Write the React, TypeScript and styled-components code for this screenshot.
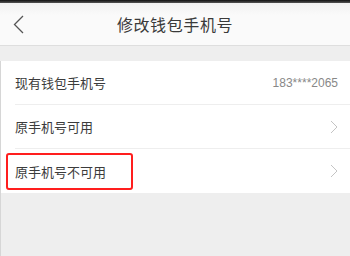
import React from 'react';
import styled, { createGlobalStyle } from 'styled-components';

const GlobalStyle = createGlobalStyle`
  html, body {
    margin: 0;
    padding: 0;
    background: #eeeeee;
  }
  body {
    font-family: "Noto Sans CJK SC", "Liberation Sans", sans-serif;
  }
`;

const Page = styled.div`
  width: 350px;
  height: 256px;
  background: #eeeeee;
  overflow: hidden;
  position: relative;
`;

const StatusEdge = styled.div`
  height: 3px;
  background: linear-gradient(#111, #555);
`;

const Header = styled.header`
  height: 42px;
  display: grid;
  grid-template-columns: 40px 1fr 40px;
  align-items: center;
  background: linear-gradient(#f2f2f2, #fafafa 30%);
  border-bottom: 1px solid #dedede;
`;

const BackButton = styled.div`
  display: flex;
  align-items: center;
  padding-left: 13px;
  height: 100%;
`;

const Title = styled.h1`
  margin: 0;
  text-align: center;
  font-size: 16px;
  font-weight: 400;
  letter-spacing: 0.6px;
  color: #3a3a3a;
`;

const Body = styled.div`
  margin-top: 15px;
  border-left: 1px solid #d6d6d6;
  height: 210px;
`;

const List = styled.div`
  background: #fff;
  padding-left: 14px;
`;

const Row = styled.div<{ $last?: boolean }>`
  height: 44px;
  display: flex;
  align-items: center;
  justify-content: space-between;
  padding-right: 12px;
  border-bottom: ${p => (p.$last ? 'none' : '1px solid #eeeeee')};
  box-sizing: border-box;
  position: relative;
`;

const Label = styled.span`
  font-size: 13px;
  color: #3c3c3c;
`;

const Value = styled.span`
  font-family: "Liberation Sans", sans-serif;
  font-size: 12px;
  color: #888;
`;

const Highlight = styled.div`
  position: absolute;
  left: -9px;
  top: 4px;
  width: 123px;
  height: 33px;
  border: 2px solid #ff1e1e;
  border-radius: 3px;
`;

const Chevron = () => (
  <svg width="8" height="14" viewBox="0 0 8 14">
    <path d="M1 1 L7 7 L1 13" fill="none" stroke="#c4c4c4" strokeWidth="1" />
  </svg>
);

export default function App() {
  return (
    <Page>
      <GlobalStyle />
      <StatusEdge />
      <Header>
        <BackButton>
          <svg width="11" height="19" viewBox="0 0 11 19">
            <path d="M10 1 L1.5 9.5 L10 18" fill="none" stroke="#555" strokeWidth="1.3" />
          </svg>
        </BackButton>
        <Title>修改钱包手机号</Title>
        <div />
      </Header>
      <Body>
        <List>
          <Row>
            <Label>现有钱包手机号</Label>
            <Value>183****2065</Value>
          </Row>
          <Row>
            <Label>原手机号可用</Label>
            <Chevron />
          </Row>
          <Row $last>
            <Label>原手机号不可用</Label>
            <Chevron />
            <Highlight />
          </Row>
        </List>
      </Body>
    </Page>
  );
}
